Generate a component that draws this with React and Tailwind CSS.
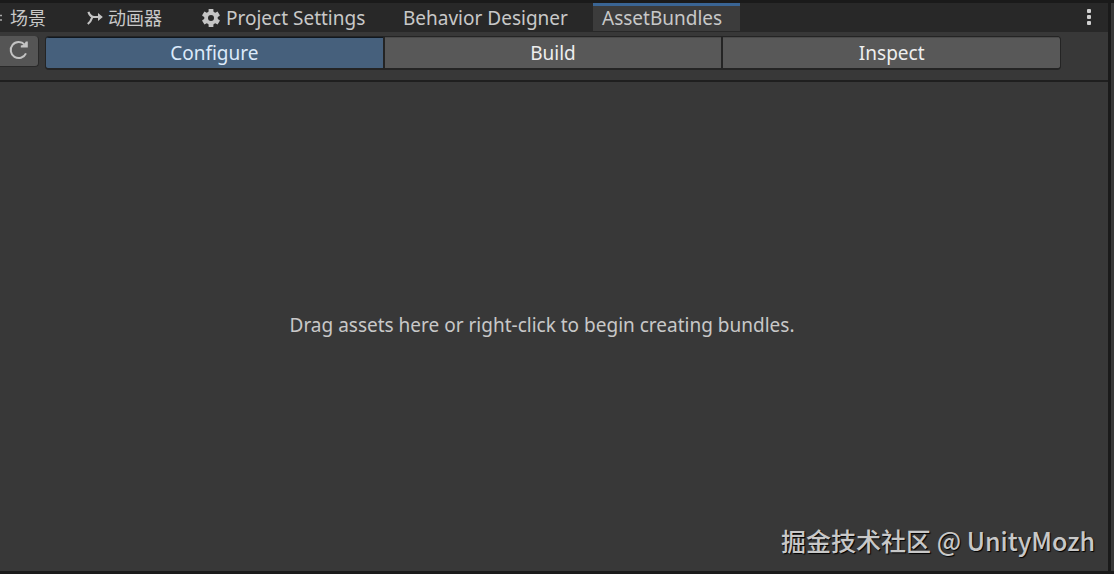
function SceneIcon() {
  return (
    <span className="flex w-[3px] shrink-0 justify-end overflow-hidden">
      <svg width="16" height="16" viewBox="0 0 16 16" className="shrink-0" fill="none" stroke="#a8a8a8" strokeWidth="1.5" aria-hidden="true">
        <path d="M5 2v12M10 2v12M1 5.5h14M1 10h14" />
      </svg>
    </span>
  );
}

function AnimatorIcon() {
  return (
    <svg width="16" height="16" viewBox="0 0 16 16" className="shrink-0" fill="none" stroke="#c4c4c4" strokeWidth="2.2" aria-hidden="true">
      <path d="M1.4 1.8C2.5 5 4.5 7 7.5 7H13M0.8 14C2.6 12.6 4.4 10 5.4 7" />
      <path d="M11 3L15.8 7L11 11Z" fill="#c4c4c4" stroke="none" />
    </svg>
  );
}

function GearIcon() {
  return (
    <svg width="18" height="18" viewBox="0 0 18 18" className="shrink-0" aria-hidden="true">
      <g fill="#c4c4c4">
        <rect x="6.6" y="0" width="4.8" height="18" rx="0.6" />
        <rect x="6.6" y="0" width="4.8" height="18" rx="0.6" transform="rotate(60 9 9)" />
        <rect x="6.6" y="0" width="4.8" height="18" rx="0.6" transform="rotate(120 9 9)" />
        <circle cx="9" cy="9" r="6.8" />
      </g>
      <circle cx="9" cy="9" r="3" fill="#282828" />
    </svg>
  );
}

function RefreshIcon() {
  return (
    <svg width="20" height="20" viewBox="0 0 20 20" className="shrink-0" aria-hidden="true">
      <path d="M17 13.4A8 8 0 1 1 15.6 4.6" fill="none" stroke="#c4c4c4" strokeWidth="2" />
      <path d="M18.8 1.4V7.6H11.8V5.6L15 4.8L16.8 1.4Z" fill="#c4c4c4" />
    </svg>
  );
}

const tabs = [
  { label: "场景", icon: SceneIcon, layout: "w-[78px] gap-[7px] text-lg" },
  { label: "动画器", icon: AnimatorIcon, layout: "w-[115px] gap-[5px] pl-[9px] text-lg" },
  { label: "Project Settings", icon: GearIcon, layout: "w-[201px] gap-1.5 pl-[9px]" },
  { label: "Behavior Designer", layout: "w-[199px] pl-[9px]" },
  { label: "AssetBundles", active: true, layout: "w-[147px] pl-[9px]" },
];

const modes = ["Configure", "Build", "Inspect"];

export default function App() {
  return (
    <div className="flex min-h-screen flex-col border-y-3 border-[#1a1a1a] bg-[#383838] font-['Noto_Sans','Noto_Sans_CJK_SC',sans-serif] text-[19px] text-[#c8c8c8]">
      <div className="flex grow">
        <main className="flex min-w-0 grow flex-col">
          <div className="flex h-[29px] shrink-0 bg-[#282828]">
            <div role="tablist" className="flex">
              {tabs.map(({ label, icon: Icon, active, layout }) => (
                <button
                  key={label}
                  role="tab"
                  aria-selected={!!active}
                  className={`flex h-7 shrink-0 items-center whitespace-nowrap border-t-3 pb-px leading-6 ${layout} ${
                    active ? "border-[#3a6594] bg-[#3c3c3c]" : "border-transparent"
                  }`}
                >
                  {Icon && <Icon />}
                  <span className="leading-6">{label}</span>
                </button>
              ))}
            </div>
            <button aria-label="More options" className="mr-[11px] ml-auto flex w-4 items-center justify-center pb-0.5">
              <svg width="4" height="16" viewBox="0 0 4 16" fill="#d0d0d0" aria-hidden="true">
                <rect y="0" width="4" height="4" rx="1" />
                <rect y="6" width="4" height="4" rx="1" />
                <rect y="12" width="4" height="4" rx="1" />
              </svg>
            </button>
          </div>

          <div className="flex h-[50px] shrink-0 items-start border-b-2 border-[#1f1f1f] pt-1 pr-[47px]">
            <button
              aria-label="Refresh"
              className="flex h-[31px] w-[39px] shrink-0 items-center justify-center rounded-r-sm border-r border-b border-[#292929] bg-[#555555] pb-0.5"
            >
              <RefreshIcon />
            </button>
            <div className="ml-1.5 flex h-[34px] grow gap-0.5 overflow-hidden rounded border border-b-2 border-[#242424] bg-[#242424]">
              {modes.map((mode, i) => (
                <button
                  key={mode}
                  aria-pressed={i === 0}
                  className={`min-w-0 flex-1 border-t leading-6 ${
                    i === 0
                      ? "border-[#101820] bg-[#46607c] text-[#dceafa]"
                      : "border-[#4a4a4a] bg-[#585858] text-[#eeeeee]"
                  }`}
                >
                  {mode}
                </button>
              ))}
            </div>
          </div>

          <section className="flex grow items-center justify-center pr-6 pb-0.5">
            <p>Drag assets here or right-click to begin creating bundles.</p>
          </section>
        </main>
        <div className="w-[3px] shrink-0 bg-[#1a1a1a]" />
        <aside className="w-[3px] shrink-0 bg-[#383838]" />
      </div>
      <div className="absolute right-[19px] bottom-[18px] font-['Noto_Sans_CJK_SC',sans-serif] text-[25px] leading-8 font-medium text-[#c8c8c8] [text-shadow:1px_1px_1px_#000]">
        掘金技术社区 @ UnityMozh
      </div>
    </div>
  );
}
